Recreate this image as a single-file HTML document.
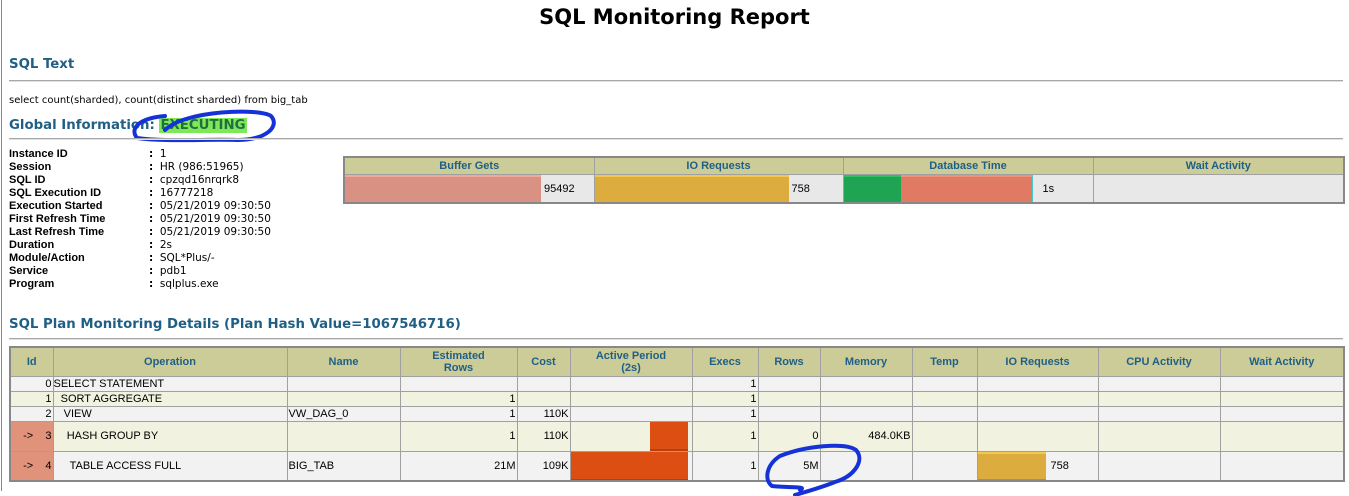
<!DOCTYPE html>
<html><head><meta charset="utf-8"><style>
*{margin:0;padding:0;box-sizing:border-box}
body{width:1349px;height:496px;background:#fff;position:relative;overflow:hidden;font-family:"Liberation Sans","DejaVu Sans",sans-serif;font-size:11px;color:#000}
.a{position:absolute;white-space:nowrap}
.h{font-family:"DejaVu Sans",sans-serif;font-weight:bold;font-size:13.3px;color:#1f5f85}
.hr{position:absolute;left:9px;width:1334px;height:2px;background:#a8a8a8;border-bottom:1px solid #e0e0e0}
.lab{font-weight:bold;font-size:11px}
table{position:absolute;border-collapse:collapse;table-layout:fixed}
td,th{border:1px solid #a0a0a0;font-size:11px;white-space:nowrap;overflow:hidden;padding:0 1px}
th{background:#cccc99;color:#1f5f85;font-weight:bold;text-align:center;line-height:12px}
.r{text-align:right}
.g{background:#f2f2f2}.y{background:#f1f3e0}
.arr{background:#e0927a !important}
</style></head><body>
<div class="a" style="left:1px;top:0;width:1px;height:491px;background:#888"></div>
<div class="a" style="left:0;width:1349px;top:5px;text-align:center;font-family:'DejaVu Sans',sans-serif;font-weight:bold;font-size:21px">SQL Monitoring Report</div>
<div class="a h" style="left:9px;top:57px">SQL Text</div>
<div class="hr" style="top:80px"></div>
<div class="a" style="left:9px;top:95px;font-family:'DejaVu Sans',sans-serif;font-size:10px">select count(sharded), count(distinct sharded) from big_tab</div>
<div class="a h" style="left:9px;top:118px">Global Information: <span style="background:#80e858;color:#1f6f40;padding:0 1px">EXECUTING</span></div>
<svg class="a" style="left:125px;top:106px" width="155" height="42"><path d="M40 24 C60 4,135 2,146 10 C155 20,142 34,112 34 C80 33,40 36,12 32 C4 22,15 12,40 10" fill="none" stroke="#1432d8" stroke-width="4" stroke-linecap="round"/></svg>
<div class="hr" style="top:138px"></div>
<div class="a lab" style="left:9px;top:148px;line-height:13px">Instance ID<br>Session<br>SQL ID<br>SQL Execution ID<br>Execution Started<br>First Refresh Time<br>Last Refresh Time<br>Duration<br>Module/Action<br>Service<br>Program</div>
<div class="a" style="left:149px;top:148px;line-height:13px;font-family:'DejaVu Sans',sans-serif;font-size:10.5px"><b>:</b>&nbsp; 1<br><b>:</b>&nbsp; HR (986:51965)<br><b>:</b>&nbsp; cpzqd16nrqrk8<br><b>:</b>&nbsp; 16777218<br><b>:</b>&nbsp; 05/21/2019 09:30:50<br><b>:</b>&nbsp; 05/21/2019 09:30:50<br><b>:</b>&nbsp; 05/21/2019 09:30:50<br><b>:</b>&nbsp; 2s<br><b>:</b>&nbsp; SQL*Plus/-<br><b>:</b>&nbsp; pdb1<br><b>:</b>&nbsp; sqlplus.exe</div>

<table style="left:343px;top:156px;width:1000px;border:2px solid #888">
<colgroup><col style="width:250px"><col style="width:249px"><col style="width:250px"><col style="width:251px"></colgroup>
<tr style="height:17px"><th>Buffer Gets</th><th>IO Requests</th><th>Database Time</th><th>Wait Activity</th></tr>
<tr style="height:29px;background:#e8e8e8">
<td style="padding:0;position:relative"><div style="position:absolute;left:0;top:0;width:196px;height:29px;background:#d99184;border-top:2px solid #f0a898;border-bottom:2px solid #b87a6c"></div><span style="position:absolute;left:199px;top:8px">95492</span></td>
<td style="padding:0;position:relative"><div style="position:absolute;left:0;top:0;width:194px;height:29px;background:#dcac3e;border-top:2px solid #f4c850;border-bottom:2px solid #b89030"></div><span style="position:absolute;left:197px;top:8px">758</span></td>
<td style="padding:0;position:relative"><div style="position:absolute;left:0;top:0;width:57px;height:29px;background:#1ea452;border-top:2px solid #30c060;border-bottom:2px solid #0d6a30"></div><div style="position:absolute;left:57px;top:0;width:132px;height:29px;background:#e07a62;border-top:2px solid #f09078;border-bottom:2px solid #b86050;border-right:1px solid #4cc"></div><span style="position:absolute;left:199px;top:8px">1s</span></td>
<td></td></tr>
</table>

<div class="a h" style="left:9px;top:317px">SQL Plan Monitoring Details (Plan Hash Value=1067546716)</div>
<div class="hr" style="top:338px"></div>

<table style="left:9px;top:346px;width:1334px;border:2px solid #888">
<colgroup><col style="width:43px"><col style="width:234px"><col style="width:113px"><col style="width:117px"><col style="width:53px"><col style="width:122px"><col style="width:66px"><col style="width:62px"><col style="width:92px"><col style="width:65px"><col style="width:121px"><col style="width:122px"><col style="width:124px"></colgroup>
<tr style="height:29px"><th>Id</th><th>Operation</th><th>Name</th><th>Estimated<br>Rows</th><th>Cost</th><th>Active Period<br>(2s)</th><th>Execs</th><th>Rows</th><th>Memory</th><th>Temp</th><th>IO Requests</th><th>CPU Activity</th><th>Wait Activity</th></tr>
<tr class="g" style="height:15px"><td class="r">0</td><td style="padding:0">SELECT STATEMENT</td><td></td><td></td><td></td><td></td><td class="r">1</td><td></td><td></td><td></td><td></td><td></td><td></td></tr>
<tr class="y" style="height:15px"><td class="r">1</td><td>&nbsp; SORT AGGREGATE</td><td></td><td class="r">1</td><td></td><td></td><td class="r">1</td><td></td><td></td><td></td><td></td><td></td><td></td></tr>
<tr class="g" style="height:15px"><td class="r">2</td><td>&nbsp;&nbsp; VIEW</td><td>VW_DAG_0</td><td class="r">1</td><td class="r">110K</td><td></td><td class="r">1</td><td></td><td></td><td></td><td></td><td></td><td></td></tr>
<tr class="y" style="height:30px"><td class="r arr">-&gt;&nbsp;&nbsp;&nbsp; 3</td><td>&nbsp;&nbsp;&nbsp; HASH GROUP BY</td><td></td><td class="r">1</td><td class="r">110K</td><td style="padding:0;position:relative"><div style="position:absolute;left:79px;top:0;width:38px;height:29px;background:#dc4e12;border-bottom:2px solid #b84010"></div></td><td class="r">1</td><td class="r">0</td><td class="r">484.0KB</td><td></td><td></td><td></td><td></td></tr>
<tr class="g" style="height:30px"><td class="r arr">-&gt;&nbsp;&nbsp;&nbsp; 4</td><td>&nbsp;&nbsp;&nbsp;&nbsp; TABLE ACCESS FULL</td><td>BIG_TAB</td><td class="r">21M</td><td class="r">109K</td><td style="padding:0;position:relative"><div style="position:absolute;left:0;top:0;width:117px;height:29px;background:#dc4e12;border-bottom:2px solid #b84010"></div></td><td class="r">1</td><td class="r">5M</td><td></td><td></td><td style="padding:0;position:relative"><div style="position:absolute;left:0;top:0;width:68px;height:29px;background:#dcac3e;border-top:2px solid #f4c850;border-bottom:2px solid #b89030"></div><span style="position:absolute;left:73px;top:8px">758</span></td><td></td><td></td></tr>
</table>
<svg class="a" style="left:760px;top:440px" width="110" height="56"><path d="M40 50 C48 46,30 48,12 46 C4 40,6 25,20 16 C45 6,85 2,96 10 C105 20,95 36,75 42 C60 48,45 52,35 55" fill="none" stroke="#1432d8" stroke-width="4" stroke-linecap="round"/></svg>
</body></html>
